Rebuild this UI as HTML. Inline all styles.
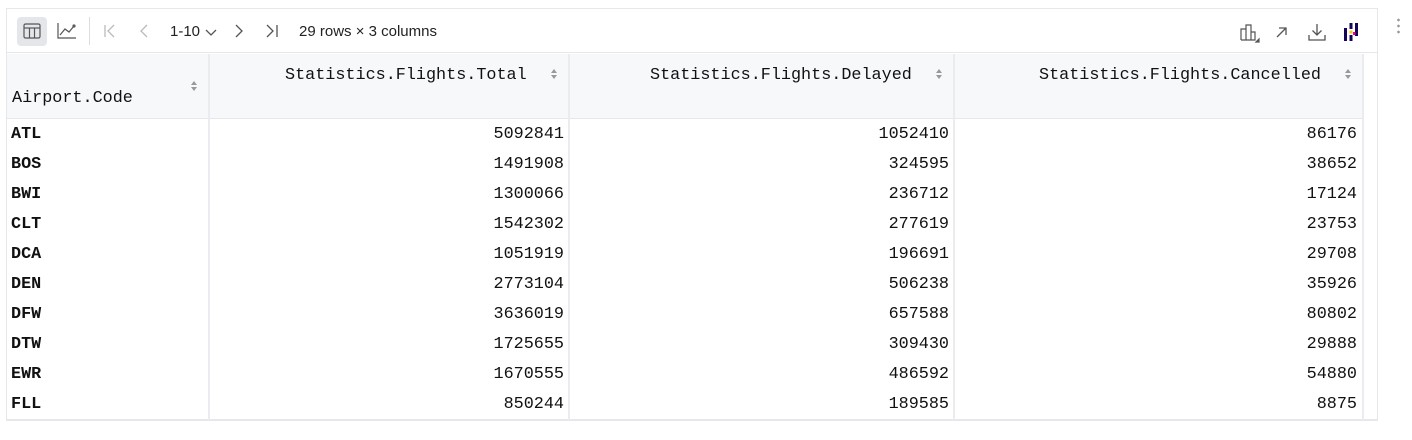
<!DOCTYPE html>
<html><head><meta charset="utf-8"><style>
*{margin:0;padding:0;box-sizing:border-box}
body{width:1412px;height:440px;background:#fff;position:relative;overflow:hidden;font-family:"Liberation Sans",sans-serif}
.box{position:absolute;left:6px;top:8px;width:1372px;height:413px;border:1px solid #e6e7eb;border-bottom:2px solid #e6e7eb}
.tb{position:absolute;left:0;top:0;width:100%;height:44px;border-bottom:1px solid #e6e7eb}
.t{position:absolute;font-size:15px;color:#222;top:14px}
.hdr{position:absolute;left:0;top:45px;width:1356px;height:65px;background:#f7f8fa;border-bottom:1px solid #e6e7eb}
.vl{position:absolute;top:45px;width:2px;height:366px;background:#ebecef}
.m{position:absolute;font-family:"Liberation Mono",monospace;font-size:16.8px;color:#111;white-space:pre;line-height:20px}
.b{font-weight:bold}
.r{text-align:right}
.s{position:absolute;width:8px;height:12px}
</style></head><body>
<div class="box">
<div class="tb">
 <div style="position:absolute;left:10px;top:8px;width:30px;height:29px;background:#e5e6ea;border-radius:4px"></div>
 <svg style="position:absolute;left:16px;top:14px" width="18" height="16" viewBox="0 0 18 16" fill="none" stroke="#555" stroke-width="1.2"><rect x="1" y="1" width="16" height="14" rx="1.5"/><line x1="1" y1="5" x2="17" y2="5"/><line x1="6.5" y1="5" x2="6.5" y2="15"/><line x1="11.5" y1="5" x2="11.5" y2="15"/></svg>
 <svg style="position:absolute;left:50px;top:13px" width="20" height="17" viewBox="0 0 20 17" fill="none" stroke="#555" stroke-width="1.2"><path d="M1 1V16H19"/><path d="M3 13L8 7L12 10L17 4"/><circle cx="17" cy="4" r="1"/></svg>
 <div style="position:absolute;left:82px;top:8px;width:1px;height:28px;background:#ddd"></div>
 <svg style="position:absolute;left:96px;top:15px" width="14" height="14" viewBox="0 0 14 14" fill="none" stroke="#bbb" stroke-width="1.3"><path d="M2 1V13M11 1L5 7L11 13"/></svg>
 <svg style="position:absolute;left:131px;top:15px" width="12" height="14" viewBox="0 0 12 14" fill="none" stroke="#bbb" stroke-width="1.3"><path d="M9 1L3 7L9 13"/></svg>
 <div class="t" style="left:163px">1-10</div>
 <svg style="position:absolute;left:198px;top:20px" width="12" height="8" viewBox="0 0 12 8" fill="none" stroke="#555" stroke-width="1.3"><path d="M1 1L6 6L11 1"/></svg>
 <svg style="position:absolute;left:226px;top:15px" width="12" height="14" viewBox="0 0 12 14" fill="none" stroke="#555" stroke-width="1.3"><path d="M3 1L9 7L3 13"/></svg>
 <svg style="position:absolute;left:258px;top:15px" width="14" height="14" viewBox="0 0 14 14" fill="none" stroke="#555" stroke-width="1.3"><path d="M2 1L8 7L2 13M12 1V13"/></svg>
 <div class="t" style="left:292px">29 rows × 3 columns</div>
 <svg style="position:absolute;left:1233px;top:14px" width="20" height="20" viewBox="0 0 20 20" fill="none" stroke="#555" stroke-width="1.2"><path d="M1 17V6H6V17M6 17V2H11V17M11 17V9H15V17H1"/><path d="M16 19L19 19L19 16Z" fill="#555"/></svg>
 <svg style="position:absolute;left:1268px;top:17px" width="13" height="13" viewBox="0 0 13 13" fill="none" stroke="#555" stroke-width="1.3"><path d="M2 11L11 2M4 2H11V9"/></svg>
 <svg style="position:absolute;left:1301px;top:14px" width="18" height="18" viewBox="0 0 18 18" fill="none" stroke="#555" stroke-width="1.3"><path d="M9 1V12M4.5 7.5L9 12L13.5 7.5M1 12V17H17V12"/></svg>
 <svg style="position:absolute;left:1336px;top:13px" width="16" height="20" viewBox="0 0 16 20"><rect x="1" y="6" width="3" height="13" fill="#150458"/><rect x="6.5" y="1" width="3" height="6" fill="#150458"/><rect x="6.5" y="8.5" width="3" height="3" fill="#ffca00"/><rect x="6.5" y="13" width="3" height="6" fill="#150458"/><rect x="12" y="1" width="3" height="13" fill="#150458"/><rect x="10" y="10" width="2.5" height="3" fill="#e70488"/></svg>
</div>
<div class="hdr"></div>
<div class="vl" style="left:201px"></div>
<div class="vl" style="left:561px"></div>
<div class="vl" style="left:946px"></div>
<div class="vl" style="left:1355px"></div>
</div>
<div style="position:absolute;left:1397px;top:17px;width:3px;height:17px;background:radial-gradient(circle,#999 1.2px,transparent 1.5px) 0 0/3px 6px repeat-y"></div>
<div class="m" style="left:12px;top:89px">Airport.Code</div>
<div class="m" style="left:285px;top:66px">Statistics.Flights.Total</div>
<div class="m" style="left:650px;top:66px">Statistics.Flights.Delayed</div>
<div class="m" style="left:1039px;top:66px">Statistics.Flights.Cancelled</div>
<svg class="s" style="left:190px;top:80px" viewBox="0 0 8 12"><path d="M1 5L4 1L7 5ZM1 7L4 11L7 7Z" fill="#999"/></svg>
<svg class="s" style="left:550px;top:68px" viewBox="0 0 8 12"><path d="M1 5L4 1L7 5ZM1 7L4 11L7 7Z" fill="#999"/></svg>
<svg class="s" style="left:935px;top:68px" viewBox="0 0 8 12"><path d="M1 5L4 1L7 5ZM1 7L4 11L7 7Z" fill="#999"/></svg>
<svg class="s" style="left:1344px;top:68px" viewBox="0 0 8 12"><path d="M1 5L4 1L7 5ZM1 7L4 11L7 7Z" fill="#999"/></svg>
<div class="m b" style="left:11px;top:120px;line-height:30px">ATL
BOS
BWI
CLT
DCA
DEN
DFW
DTW
EWR
FLL</div>
<div class="m r" style="right:848px;top:120px;line-height:30px">5092841
1491908
1300066
1542302
1051919
2773104
3636019
1725655
1670555
850244</div>
<div class="m r" style="right:463px;top:120px;line-height:30px">1052410
324595
236712
277619
196691
506238
657588
309430
486592
189585</div>
<div class="m r" style="right:55px;top:120px;line-height:30px">86176
38652
17124
23753
29708
35926
80802
29888
54880
8875</div>
</body></html>
